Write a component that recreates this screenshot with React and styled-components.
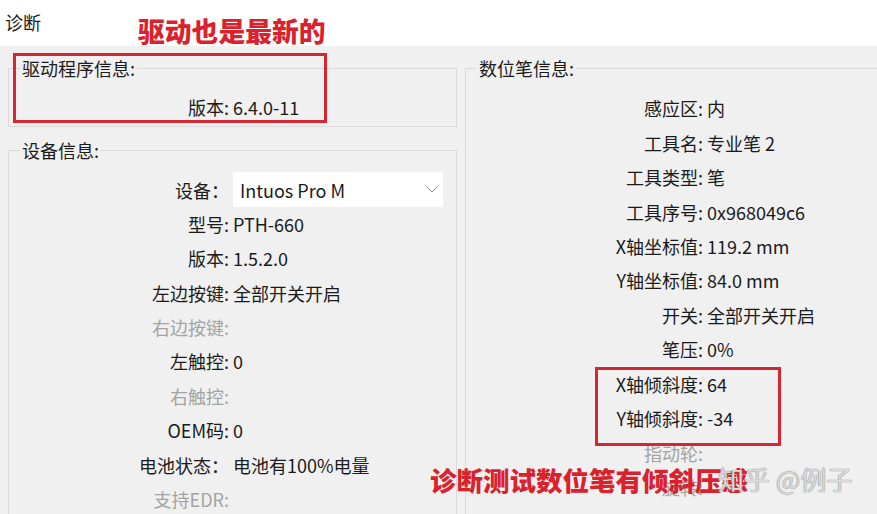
import React from "react";
import styled, { createGlobalStyle } from "styled-components";

const Global = createGlobalStyle`
  html, body { margin: 0; padding: 0; background: #ffffff; }
  body { font-family: "Noto Sans CJK SC", "Noto Sans", sans-serif; color: #1b1b1b; }
`;

const Page = styled.div`
  position: relative;
  width: 877px;
  height: 514px;
  overflow: hidden;
  display: flex;
  flex-direction: column;
`;

const Header = styled.div`
  height: 46px;
  flex: none;
  background: #ffffff;
  padding: 11px 0 0 5px;
  box-sizing: border-box;
  font-size: 18px;
  line-height: 22px;
`;

const Main = styled.div`
  flex: 1;
  background: #f0f0f0;
  display: flex;
  gap: 8px;
  padding: 12px 0 0 8px;
  overflow: hidden;
  box-sizing: border-box;
`;

const Column = styled.div`
  display: flex;
  flex-direction: column;
  gap: 12.6px;
  width: ${(p) => p.$w}px;
  flex: none;
`;

const Group = styled.fieldset`
  margin: 0;
  padding: ${(p) => p.$pt}px 0 ${(p) => p.$pb}px 0;
  border: 1px solid #dadada;
  min-width: 0;
  box-sizing: border-box;
  width: ${(p) => p.$w}px;
`;

const Legend = styled.legend`
  margin-left: 11px;
  padding: 0 2px;
  font-size: 18px;
  line-height: 20px;
  color: #1b1b1b;
`;

const Row = styled.div`
  display: grid;
  grid-template-columns: ${(p) => p.$lw}px 1fr;
  column-gap: 4px;
  height: 34.45px;
  align-items: center;
  font-size: 18px;
  line-height: 22px;
  color: ${(p) => (p.$disabled ? "#a3a3a3" : "#1b1b1b")};
`;

const Label = styled.span`
  text-align: right;
  white-space: nowrap;
`;

const Value = styled.span`
  white-space: nowrap;
`;

const Select = styled.div`
  width: 210px;
  height: 35px;
  background: #ffffff;
  display: flex;
  align-items: center;
  justify-content: space-between;
  padding: 0 5px 0 7px;
  box-sizing: border-box;
  font-size: 18px;
  color: #1b1b1b;
`;

const RedText = styled.div`
  position: absolute;
  left: ${(p) => p.$x}px;
  top: ${(p) => p.$y}px;
  color: #d9222d;
  font-weight: 900;
  font-size: ${(p) => p.$size}px;
  line-height: 1;
  white-space: nowrap;
`;

const RedBox = styled.div`
  position: absolute;
  left: ${(p) => p.$x}px;
  top: ${(p) => p.$y}px;
  width: ${(p) => p.$w}px;
  height: ${(p) => p.$h}px;
  border: 3px solid #d32833;
  box-sizing: border-box;
`;

const Watermark = styled.div`
  position: absolute;
  left: 718px;
  top: 466px;
  font-size: 26px;
  line-height: 1;
  color: rgba(232, 232, 232, 0.85);
  text-shadow: 0 0 1px #8a8a8a, 0 0 1px #8a8a8a;
  white-space: nowrap;
`;

const Chevron = () => (
  <svg width="12" height="7" viewBox="0 0 12 7" fill="none">
    <polyline points="0.5,0.5 6,6 11.5,0.5" stroke="#8a8a8a" strokeWidth="1" />
  </svg>
);

const deviceRows = [
  { l: "型号:", v: "PTH-660" },
  { l: "版本:", v: "1.5.2.0" },
  { l: "左边按键:", v: "全部开关开启" },
  { l: "右边按键:", v: "", d: true },
  { l: "左触控:", v: "0" },
  { l: "右触控:", v: "", d: true },
  { l: "OEM码:", v: "0" },
  { l: "电池状态：", v: "电池有100%电量" },
  { l: "支持EDR:", v: "", d: true },
];

const penRows = [
  { l: "感应区:", v: "内" },
  { l: "工具名:", v: "专业笔 2" },
  { l: "工具类型:", v: "笔" },
  { l: "工具序号:", v: "0x968049c6" },
  { l: "X轴坐标值:", v: "119.2 mm" },
  { l: "Y轴坐标值:", v: "84.0 mm" },
  { l: "开关:", v: "全部开关开启" },
  { l: "笔压:", v: "0%" },
  { l: "X轴倾斜度:", v: "64" },
  { l: "Y轴倾斜度:", v: "-34" },
  { l: "指动轮:", v: "", d: true },
  { l: "旋转:", v: "", d: true },
];

export default function App() {
  return (
    <Page>
      <Global />
      <Header>诊断</Header>
      <Main>
        <Column $w={449}>
          <Group $w={449} $pt={12} $pb={2}>
            <Legend>驱动程序信息:</Legend>
            <Row $lw={220}>
              <Label>版本:</Label>
              <Value>6.4.0-11</Value>
            </Row>
          </Group>
          <Group $w={449} $pt={12} $pb={20}>
            <Legend>设备信息:</Legend>
            <Row $lw={220}>
              <Label>设备：</Label>
              <Select>
                <span>Intuos Pro M</span>
                <Chevron />
              </Select>
            </Row>
            {deviceRows.map((r) => (
              <Row key={r.l} $lw={220} $disabled={r.d}>
                <Label>{r.l}</Label>
                <Value>{r.v}</Value>
              </Row>
            ))}
          </Group>
        </Column>
        <Column $w={430}>
          <Group $w={430} $pt={13} $pb={20}>
            <Legend>数位笔信息:</Legend>
            {penRows.map((r) => (
              <Row key={r.l} $lw={237} $disabled={r.d}>
                <Label>{r.l}</Label>
                <Value>{r.v}</Value>
              </Row>
            ))}
          </Group>
        </Column>
      </Main>

      <RedText $x={138} $y={18} $size={26.8}>驱动也是最新的</RedText>
      <RedBox $x={13} $y={53} $w={314} $h={70} />
      <RedBox $x={595} $y={367} $w={186} $h={79} />
      <RedText $x={430} $y={467} $size={26.5}>诊断测试数位笔有倾斜压感</RedText>
      <Watermark>知乎 @例子</Watermark>
    </Page>
  );
}
